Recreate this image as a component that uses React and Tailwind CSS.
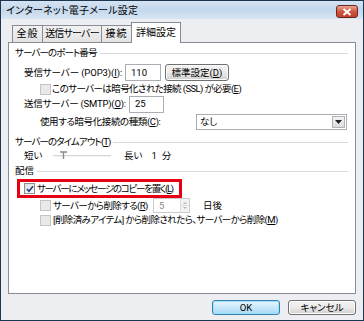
import React from "react";

const jp = "font-['Roboto','Noto_Sans_CJK_JP',sans-serif] [font-feature-settings:'palt']";

function Box({ checked, disabled }) {
  return (
    <span
      className={`inline-flex items-center justify-center w-[11px] h-[11px] shrink-0 border ${
        disabled ? "border-[#c4c4c4] bg-[#e9e9e9]" : "border-[#8e8f8f] bg-gradient-to-br from-[#dcdcdc] to-[#ffffff]"
      }`}
    >
      {checked && (
        <svg width="8" height="8" viewBox="0 0 8 8">
          <path d="M1 4 L3 6.2 L7 1.3" stroke="#1b3c8c" strokeWidth="1.6" fill="none" />
        </svg>
      )}
    </span>
  );
}

function Group({ title, className = "" }) {
  return (
    <div className={`flex items-center h-[14px] pr-[7px] ${className}`}>
      <span className="shrink-0">{title}</span>
      <span className="flex-1 h-px bg-[#d5dbe1] ml-[3px] mt-px" />
    </div>
  );
}

function Field({ value, w, className = "" }) {
  return (
    <span className={`inline-flex items-center shrink-0 h-[17px] border border-[#abadb3] bg-white pl-[5px] ${w} ${className}`}>
      {value}
    </span>
  );
}

function Btn({ children, primary, className = "" }) {
  return (
    <button
      className={`flex items-center justify-center shrink-0 rounded-[3px] border ${
        primary
          ? "border-[#3c7fb1] bg-gradient-to-b from-[#eaf6fd] to-[#a7d9f5] shadow-[inset_0_0_0_1px_#97e4fe]"
          : "border-[#707070] bg-gradient-to-b from-[#f2f2f2] via-[#ebebeb] to-[#cfcfcf] shadow-[inset_0_0_0_1px_#fcfcfc]"
      } ${className}`}
    >
      {children}
    </button>
  );
}

export default function App() {
  return (
    <div className={`w-[364px] h-[321px] bg-[#1c3550] p-px text-[9.5px] leading-none text-black whitespace-nowrap ${jp}`}>
      <div className="w-full h-full flex flex-col bg-[#eceef1]">
        <div className="h-[18px] flex items-center justify-between pl-[5px] pr-[5px] bg-gradient-to-b from-[#d6e4f3] via-[#c3d7ec] to-[#d9e6f4]">
          <span className="text-[10px] tracking-[0.2px] text-black mt-px">インターネット電子メール設定</span>
          <span className="flex items-center justify-center w-[22px] h-[13px] mt-[3px] rounded-[3px] border border-[#6b2a20] bg-gradient-to-b from-[#e8a493] via-[#d0563f] to-[#c24128]">
            <svg width="10" height="8" viewBox="0 0 10 8">
              <path d="M1.5 1 L8.5 7 M8.5 1 L1.5 7" stroke="#ffffff" strokeWidth="2" />
            </svg>
          </span>
        </div>

        <div className="flex-1 flex flex-col px-[7px]">
          <div className="flex items-end h-[22px] pl-[4px] mt-[1px] text-[10px]">
            <div className="flex items-center justify-center w-[31px] h-[17px] border border-[#898c95] border-b-0 bg-gradient-to-b from-[#f2f2f2] to-[#e3e3e3] tracking-[1px]">全般</div>
            <div className="flex items-center justify-center w-[60px] h-[17px] -ml-px border border-[#898c95] border-b-0 bg-gradient-to-b from-[#f2f2f2] to-[#e3e3e3] tracking-[-0.8px]">送信サーバー</div>
            <div className="flex items-center justify-center w-[31px] h-[17px] -ml-px border border-[#898c95] border-b-0 bg-gradient-to-b from-[#f2f2f2] to-[#e3e3e3] tracking-[1px]">接続</div>
            <div className="relative z-10 flex items-center justify-center w-[50px] h-[21px] -ml-px -mb-px border border-[#898c95] border-b-0 bg-white">詳細設定</div>
          </div>

          <div className="h-[252px] border border-[#898c95] bg-white pl-[6px] flex flex-col">
            <Group title={<span className="tracking-[-0.9px]">サーバーのポート番号</span>} className="mt-[3px]" />

            <div className="flex items-center h-[17px] mt-[4px] pl-[9px]">
              <span className="w-[101px] shrink-0 tracking-[-0.1px]">受信サーバー (POP3)(<u>I</u>):</span>
              <Field value="110" w="w-[36px]" />
              <Btn className="w-[64px] h-[17px] ml-[4px]">標準設定(<u>D</u>)</Btn>
            </div>

            <div className="flex items-center h-[14px] mt-[1px] pl-[25px]">
              <Box disabled />
              <span className="ml-[1px] tracking-[-0.6px]">このサーバーは暗号化された接続 (SSL) が必要(<u>E</u>)</span>
            </div>

            <div className="flex items-center h-[16px] pl-[9px]">
              <span className="w-[105px] shrink-0 tracking-[-0.2px]">送信サーバー (SMTP)(<u>O</u>):</span>
              <Field value="25" w="w-[35px]" className="h-[16px]" />
            </div>

            <div className="flex items-center h-[16px] mt-[2px] pl-[25px]">
              <span className="w-[156px] shrink-0 tracking-[-0.4px]">使用する暗号化接続の種類(<u>C</u>):</span>
              <span className="flex items-center w-[151px] h-[16px] border border-[#abadb3] bg-white pl-[3px]">
                <span className="flex-1">なし</span>
                <span className="flex items-center justify-center w-[13px] h-[12px] mr-px border border-[#aeb3b9] bg-gradient-to-b from-[#f4f4f4] to-[#dcdcdc]">
                  <svg width="7" height="4" viewBox="0 0 7 4"><path d="M0 0 H7 L3.5 4 Z" fill="#222" /></svg>
                </span>
              </span>
            </div>

            <Group title={<span className="tracking-[-0.9px]">サーバーのタイムアウト(<u>T</u>)</span>} className="mt-[5px]" />

            <div className="flex items-center h-[13px] pl-[9px]">
              <span className="w-[29px] shrink-0">短い</span>
              <svg width="60" height="12" viewBox="0 0 60 12" className="shrink-0">
                <rect x="0" y="5" width="58" height="2" fill="#d6d6d6" />
                <rect x="0" y="6" width="58" height="1" fill="#f4f4f4" />
                <path d="M7 2 H14 M10.5 2 V9" stroke="#8a8a8a" strokeWidth="1.4" />
              </svg>
              <span className="ml-[11px]">長い</span>
              <span className="ml-[9px]">1</span>
              <span className="ml-[5px]">分</span>
            </div>

            <Group title="配信" className="mt-[2px]" />

            <div className="flex items-center w-[165px] h-[19px] mt-[1px] ml-[2px] border-[3px] border-[#e60012] pl-[4px]">
              <Box checked />
              <span className="ml-[2px] tracking-[-1.3px]">サーバーにメッセージのコピーを置く(<u>L</u>)</span>
            </div>

            <div className="flex items-center h-[15px] pl-[25px]">
              <Box disabled />
              <span className="ml-[2px] w-[100px] shrink-0 tracking-[-0.6px]">サーバーから削除する(<u>R</u>)</span>
              <span className="flex items-center shrink-0 w-[37px] h-[15px] border border-[#c9cbcf] bg-white pl-[5px] text-[#8a8a8a]">
                <span className="flex-1">5</span>
                <span className="flex flex-col w-[9px] h-[13px] border-l border-[#dcdcdc] bg-[#f3f3f3]">
                  <svg width="8" height="13" viewBox="0 0 8 13">
                    <path d="M2 5 L4 3 L6 5 Z M2 8 L4 10 L6 8 Z" fill="#b8b8b8" />
                    <path d="M0 6.5 H8" stroke="#dedede" />
                  </svg>
                </span>
              </span>
              <span className="ml-[13px]">日後</span>
            </div>

            <div className="flex items-center h-[14px] pl-[25px]">
              <Box disabled />
              <span className="ml-[2px] tracking-[-0.6px]">[削除済みアイテム] から削除されたら、サーバーから削除(<u>M</u>)</span>
            </div>
          </div>

          <div className="flex justify-end gap-[8px] mt-[6px]">
            <Btn primary className="w-[68px] h-[15px]">OK</Btn>
            <Btn className="w-[68px] h-[15px]">キャンセル</Btn>
          </div>
        </div>
      </div>
    </div>
  );
}
